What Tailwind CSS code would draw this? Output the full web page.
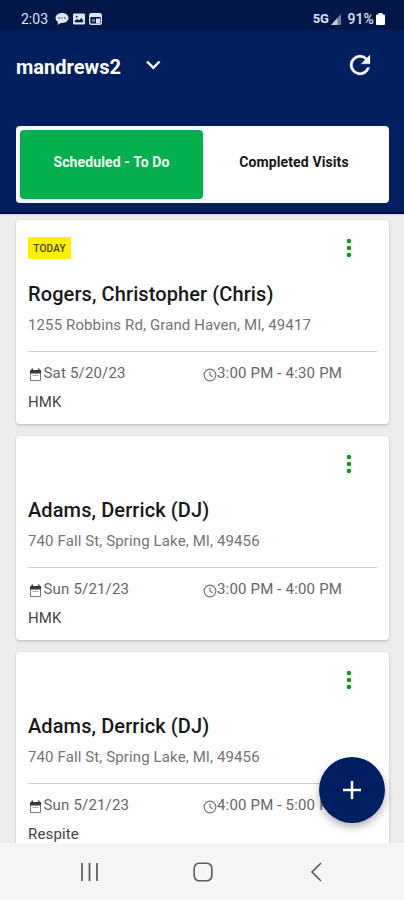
<!doctype html>
<html lang="en">

  <head>
    <meta charset="UTF-8" />
    <meta name="viewport" content="width=device-width, initial-scale=1.0" />
    <title>Scheduled Visits</title>
    <script src="https://cdn.jsdelivr.net/npm/@tailwindcss/browser@4"></script>
  </head>

  <body class="font-['Roboto',sans-serif]">
    <div class="relative w-[404px] h-[900px] flex flex-col overflow-hidden bg-[#ececec]">

      <!-- Status bar -->
      <div class="h-[30px] shrink-0 bg-[#001747] text-[#dfe3ee] flex items-center justify-between pt-2 pl-[21px] pr-[19px] text-[14px]">
        <div class="flex items-center">
          <span class="w-[34px]">2:03</span>
          <svg class="w-[14px] h-[14px]" viewBox="0 0 14 14" fill="currentColor">
            <path d="M7 1C3.2 1 .5 3.2.5 6c0 1.700 1 3.200 2.500 4.100L2.500 13l3.300-2.100L7 11c3.800 0 6.500-2.200 6.500-5S10.800 1 7 1z"/>
            <path d="M3.500 6h1.400M6.300 6h1.400M9.100 6h1.400" stroke="#001747" stroke-width="1"/>
          </svg>
          <svg class="w-[12px] h-[12px] ml-[3.500px]" viewBox="0 0 13 12">
            <rect width="13" height="12" rx="1.500" fill="currentColor"/>
            <path d="M2 9.500V8l2.500-2 2 1.500L9 5l2 2.500v2z" fill="#001747"/>
            <circle cx="4" cy="3.500" r="1" fill="#001747"/>
          </svg>
          <svg class="w-[13px] h-[12px] ml-[4.500px]" viewBox="0 0 13 12">
            <rect x=".7" y=".7" width="11.600" height="10.600" rx="1.500" fill="none" stroke="currentColor" stroke-width="1.400"/>
            <path d="M1 1h11v3H1zM7 5.500h4v5H7z" fill="currentColor"/>
            <path d="M3 6h3v3H3z" fill="currentColor" opacity=".5"/>
          </svg>
        </div>
        <div class="flex items-center">
          <span class="text-[13px] font-bold tracking-[-0.3px]">5G</span>
          <svg class="w-[10px] h-[11px] ml-[3px]" viewBox="0 0 10 11">
            <path d="M10 0v11H0z" fill="#6f7d9d"/>
            <path d="M6.500 3.900V11H0z" fill="#c3cada"/>
          </svg>
          <span class="ml-[6px] font-medium tracking-[0.1px]">91%</span>
          <svg class="w-[9px] h-[12px] ml-[2px]" viewBox="0 0 9 12" fill="#fff">
            <path d="M2.500 0h4v1.500h1.500a1 1 0 0 1 1 1V11a1 1 0 0 1-1 1H1a1 1 0 0 1-1-1V2.500a1 1 0 0 1 1-1h1.500z"/>
          </svg>
        </div>
      </div>

      <!-- Header -->
      <header class="h-[184px] shrink-0 bg-[#001f5f] px-4 flex flex-col border-b-2 border-[#00094b]">
        <div class="h-[96px] pt-[22px] flex items-start">
          <h1 class="w-[129px] text-[20px] leading-[30px] font-bold text-white">mandrews2</h1>
          <svg class="w-4 h-[10px] mt-2" viewBox="0 0 16 10" fill="none" stroke="#fff" stroke-width="2.400">
            <path d="M2 1.500l6.300 6.300 6.300-6.300"/>
          </svg>
          <svg class="w-[30px] h-[30px] ml-auto mr-[13px] -mt-[2px]" viewBox="0 0 24 24" fill="#fff" stroke="#fff" stroke-width=".25">
            <path d="M17.650 6.350A7.958 7.958 0 0 0 12 4a8 8 0 1 0 7.730 10h-2.080A6 6 0 1 1 12 6c1.660 0 3.140.69 4.220 1.780L13 11h7V4z"/>
          </svg>
        </div>
        <div class="h-[77px] w-[373px] shrink-0 bg-white rounded-[4px] p-1 flex text-[14px] font-bold tracking-[0.120px]">
          <button class="w-[183px] h-[69px] rounded-[4px] bg-[#04af4e] text-[#effff4] pb-1">Scheduled - To Do</button>
          <button class="flex-1 text-[#161616] pb-1">Completed Visits</button>
        </div>
      </header>

      <!-- Visit list -->
      <main class="flex-1 min-h-0 overflow-hidden px-4 pt-[5px] flex flex-col gap-[12.200px] border-t border-[#d5d5e2]">

        <section class="w-[373px] h-[204px] shrink-0 rounded-[4px] bg-white shadow-[0_1px_3px_rgba(0,0,0,0.22)] px-3 pt-[17px]">
          <div class="h-[45px] flex justify-between">
            <span class="w-[43px] h-[22px] rounded-[2px] bg-[#fdf000] text-[#45410b] text-[10px] font-medium tracking-[0.2px] leading-[23px] text-center">TODAY</span>
            <svg class="w-[6px] h-[20px] mr-[25.500px] mt-[1px]" viewBox="0 0 6 20" fill="#0a9a20">
              <circle cx="3" cy="3" r="2.300"/><circle cx="3" cy="10" r="2.300"/><circle cx="3" cy="17" r="2.300"/>
            </svg>
          </div>
          <h2 class="text-[20px] leading-6 font-medium tracking-[0.1px] text-[#181818] whitespace-nowrap">Rogers, Christopher (Chris)</h2>
          <p class="mt-[9px] text-[15px] leading-5 tracking-[0.120px] text-[#747474] whitespace-nowrap">1255 Robbins Rd, Grand Haven, MI, 49417</p>
          <div class="mt-4 w-[349px] border-t border-[#cfcfcf]"></div>
          <div class="mt-[11px] flex text-[15px] leading-5 tracking-[0.180px] text-[#666]">
            <div class="w-[175px] flex">
              <svg class="w-[13px] h-[14px] ml-[1px] mr-[1.500px] mt-[5px]" viewBox="0 0 13 14">
                <path d="M1.500 2.500h10v10h-10z" fill="#fff" stroke="#777"/>
                <path d="M1 2h1.500V.5H4V2h5V.5h1.500V2H12v3.500H1z" fill="#3c3c3c"/>
                <path d="M3.500 7.500h6" stroke="#aaa"/>
              </svg>
              <span>Sat 5/20/23</span>
            </div>
            <svg class="w-[14px] h-[14px] mt-[5px]" viewBox="0 0 14 14" fill="none" stroke="#6b6b6b" stroke-width="1.100">
              <circle cx="7" cy="7" r="5.900"/><path d="M7 3.500v3.800l2.600 1.600"/>
            </svg>
            <span class="whitespace-nowrap">3:00 PM - 4:30 PM</span>
          </div>
          <p class="mt-[9px] text-[15px] leading-5 tracking-[0.150px] text-[#444]">HMK</p>
        </section>

        <section class="w-[373px] h-[204px] shrink-0 rounded-[4px] bg-white shadow-[0_1px_3px_rgba(0,0,0,0.22)] px-3 pt-[17px]">
          <div class="h-[45px] flex justify-end">
            <svg class="w-[6px] h-[20px] mr-[25.500px] mt-[1px]" viewBox="0 0 6 20" fill="#0a9a20">
              <circle cx="3" cy="3" r="2.300"/><circle cx="3" cy="10" r="2.300"/><circle cx="3" cy="17" r="2.300"/>
            </svg>
          </div>
          <h2 class="text-[20px] leading-6 font-medium tracking-[0.1px] text-[#181818] whitespace-nowrap">Adams, Derrick (DJ)</h2>
          <p class="mt-[9px] text-[15px] leading-5 tracking-[0.120px] text-[#747474] whitespace-nowrap">740 Fall St, Spring Lake, MI, 49456</p>
          <div class="mt-4 w-[349px] border-t border-[#cfcfcf]"></div>
          <div class="mt-[11px] flex text-[15px] leading-5 tracking-[0.180px] text-[#666]">
            <div class="w-[175px] flex">
              <svg class="w-[13px] h-[14px] ml-[1px] mr-[1.500px] mt-[5px]" viewBox="0 0 13 14">
                <path d="M1.500 2.500h10v10h-10z" fill="#fff" stroke="#777"/>
                <path d="M1 2h1.500V.5H4V2h5V.5h1.500V2H12v3.500H1z" fill="#3c3c3c"/>
                <path d="M3.500 7.500h6" stroke="#aaa"/>
              </svg>
              <span>Sun 5/21/23</span>
            </div>
            <svg class="w-[14px] h-[14px] mt-[5px]" viewBox="0 0 14 14" fill="none" stroke="#6b6b6b" stroke-width="1.100">
              <circle cx="7" cy="7" r="5.900"/><path d="M7 3.500v3.800l2.600 1.600"/>
            </svg>
            <span class="whitespace-nowrap">3:00 PM - 4:00 PM</span>
          </div>
          <p class="mt-[9px] text-[15px] leading-5 tracking-[0.150px] text-[#444]">HMK</p>
        </section>

        <section class="w-[373px] h-[204px] shrink-0 rounded-[4px] bg-white shadow-[0_1px_3px_rgba(0,0,0,0.22)] px-3 pt-[17px]">
          <div class="h-[45px] flex justify-end">
            <svg class="w-[6px] h-[20px] mr-[25.500px] mt-[1px]" viewBox="0 0 6 20" fill="#0a9a20">
              <circle cx="3" cy="3" r="2.300"/><circle cx="3" cy="10" r="2.300"/><circle cx="3" cy="17" r="2.300"/>
            </svg>
          </div>
          <h2 class="text-[20px] leading-6 font-medium tracking-[0.1px] text-[#181818] whitespace-nowrap">Adams, Derrick (DJ)</h2>
          <p class="mt-[9px] text-[15px] leading-5 tracking-[0.120px] text-[#747474] whitespace-nowrap">740 Fall St, Spring Lake, MI, 49456</p>
          <div class="mt-4 w-[349px] border-t border-[#cfcfcf]"></div>
          <div class="mt-[11px] flex text-[15px] leading-5 tracking-[0.180px] text-[#666]">
            <div class="w-[175px] flex">
              <svg class="w-[13px] h-[14px] ml-[1px] mr-[1.500px] mt-[5px]" viewBox="0 0 13 14">
                <path d="M1.500 2.500h10v10h-10z" fill="#fff" stroke="#777"/>
                <path d="M1 2h1.500V.5H4V2h5V.5h1.500V2H12v3.500H1z" fill="#3c3c3c"/>
                <path d="M3.500 7.500h6" stroke="#aaa"/>
              </svg>
              <span>Sun 5/21/23</span>
            </div>
            <svg class="w-[14px] h-[14px] mt-[5px]" viewBox="0 0 14 14" fill="none" stroke="#6b6b6b" stroke-width="1.100">
              <circle cx="7" cy="7" r="5.900"/><path d="M7 3.500v3.800l2.600 1.600"/>
            </svg>
            <span class="whitespace-nowrap">4:00 PM - 5:00 PM</span>
          </div>
          <p class="mt-[9px] text-[15px] leading-5 tracking-[0.150px] text-[#444]">Respite</p>
        </section>
      </main>

      <!-- Floating add button -->
      <button class="absolute left-[319px] top-[757px] w-[66px] h-[66px] rounded-full bg-[#001f62] shadow-[0_4px_9px_rgba(0,0,0,0.3)] flex items-center justify-center">
        <svg class="w-[18px] h-[18px]" viewBox="0 0 18 18" stroke="#fff" stroke-width="2.500">
          <path d="M9 0v18M0 9h18"/>
        </svg>
      </button>

      <!-- Android navigation -->
      <nav class="h-[57px] shrink-0 bg-[#f5f5f5] flex items-center pl-[80px] pt-[1px]">
        <svg class="w-[20px] h-[20px]" viewBox="0 0 20 20" stroke="#5a5a5a" stroke-width="1.700">
          <path d="M2 1v18M9.500 1v18M17 1v18"/>
        </svg>
        <svg class="w-[20px] h-[20px] ml-[92.500px]" viewBox="0 0 20 20" fill="none" stroke="#5a5a5a" stroke-width="1.600">
          <rect x="1.200" y="1.200" width="17.600" height="17.600" rx="5"/>
        </svg>
        <svg class="w-[12px] h-[20px] ml-[97.500px]" viewBox="0 0 12 20" fill="none" stroke="#5a5a5a" stroke-width="1.600">
          <path d="M11 1L2 10l9 9"/>
        </svg>
      </nav>

    </div>
  </body>

</html>
